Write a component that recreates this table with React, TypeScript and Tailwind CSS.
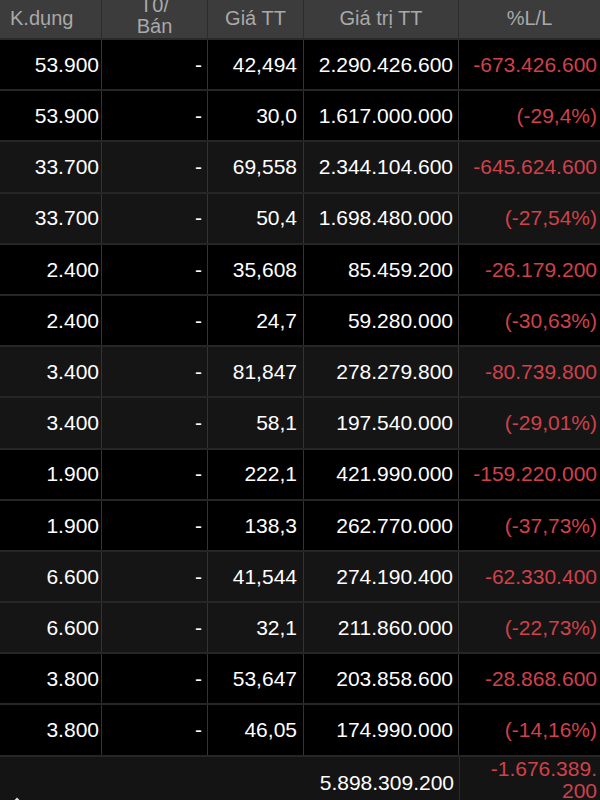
const rows: [string, string, string, string][] = [
  ["53.900", "42,494", "2.290.426.600", "-673.426.600"],
  ["53.900", "30,0", "1.617.000.000", "(-29,4%)"],
  ["33.700", "69,558", "2.344.104.600", "-645.624.600"],
  ["33.700", "50,4", "1.698.480.000", "(-27,54%)"],
  ["2.400", "35,608", "85.459.200", "-26.179.200"],
  ["2.400", "24,7", "59.280.000", "(-30,63%)"],
  ["3.400", "81,847", "278.279.800", "-80.739.800"],
  ["3.400", "58,1", "197.540.000", "(-29,01%)"],
  ["1.900", "222,1", "421.990.000", "-159.220.000"],
  ["1.900", "138,3", "262.770.000", "(-37,73%)"],
  ["6.600", "41,544", "274.190.400", "-62.330.400"],
  ["6.600", "32,1", "211.860.000", "(-22,73%)"],
  ["3.800", "53,647", "203.858.600", "-28.868.600"],
  ["3.800", "46,05", "174.990.000", "(-14,16%)"],
];

const cols = "grid grid-cols-[102px_106px_96px_155px_141px]";

export default function App() {
  return (
    <div className="w-[600px] h-[800px] overflow-hidden bg-black font-['Liberation_Sans',Arial,sans-serif] text-[21px]">
      {/* header */}
      <div className={`${cols} h-[40px] bg-[#3c3c3c] text-[#a9a9a9] text-[20px] border-b-2 border-[#2a2a2a]`}>
        <div className="pl-[10px] pt-[3px] border-r border-[#2c2c2c]">K.dụng</div>
        <div className="flex flex-col items-center justify-end leading-[21px] pb-[1px] overflow-hidden border-r border-[#2c2c2c]">
          <span>T0/</span>
          <span>Bán</span>
        </div>
        <div className="text-center pt-[3px] border-r border-[#2c2c2c]">Giá TT</div>
        <div className="text-center pt-[3px] border-r border-[#2c2c2c]">Giá trị TT</div>
        <div className="text-center pt-[3px]">%L/L</div>
      </div>

      {rows.map((r, i) => {
        const dark = Math.floor(i / 2) % 2 === 1;
        return (
          <div
            key={i}
            className={`${cols} h-[51.2px] border-b-2 border-[#262626] ${dark ? "bg-[#151515]" : "bg-black"}`}
          >
            <div className="flex items-center justify-end pr-[2px] text-white border-r border-[#333]">{r[0]}</div>
            <div className="flex items-center justify-end pr-[5px] text-white border-r border-[#333]">-</div>
            <div className="flex items-center justify-end pr-[6px] text-white border-r border-[#333]">{r[1]}</div>
            <div className="flex items-center justify-end pr-[5px] text-white border-r border-[#333]">{r[2]}</div>
            <div className="flex items-center justify-end pr-[3px] text-[#d0414a] whitespace-nowrap">{r[3]}</div>
          </div>
        );
      })}

      {/* total */}
      <div className={`${cols} h-[44px] bg-[#141414]`}>
        <div className="flex items-end pl-[12px]">
          <svg width="10" height="6" viewBox="0 0 10 6" className="mb-[-1px]">
            <path d="M1 6 L5 2 L9 6" stroke="#ddd" strokeWidth="2" fill="none" />
          </svg>
        </div>
        <div />
        <div />
        <div className="flex items-center justify-end pr-[5px] pt-[8px] text-white">5.898.309.200</div>
        <div className="text-right pr-[3px] text-[#d0414a] leading-[22px] pt-[1px] border-l border-[#2a2a2a] break-all">
          -1.676.389.
          <br />
          200
        </div>
      </div>
    </div>
  );
}
